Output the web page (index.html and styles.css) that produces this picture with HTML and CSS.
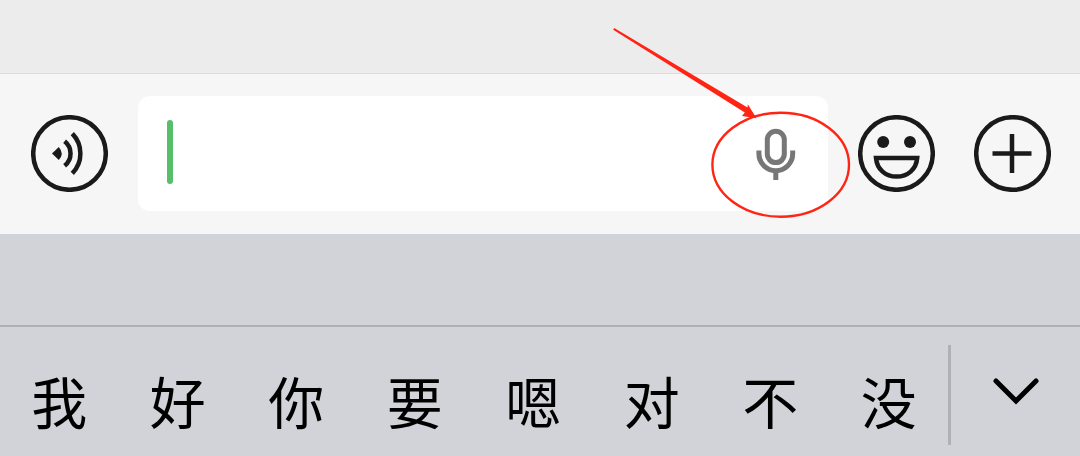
FILE: index.html
```html
<!DOCTYPE html>
<html lang="zh-CN">
<head>
  <meta charset="UTF-8">
  <meta name="viewport" content="width=device-width, initial-scale=1.0">
  <title>语音输入</title>
  <link rel="stylesheet" href="styles.css">
</head>
<body>
  <main class="chat"></main>

  <!-- Message bar -->
  <div class="toolbar">
    <button class="icon-button" type="button" aria-label="语音">
      <svg width="77" height="77" viewBox="0 0 77 77">
        <circle class="line" cx="38.5" cy="38.5" r="36.3"/>
        <path d="M21 38.5l6.8-6.6q5.8 6.6 0 13.2z"/>
        <path class="line" d="M33.6 26.2a15.7 15.7 0 0 1 0 24.6M41.3 18.6a28.5 28.5 0 0 1 0 39.8"/>
      </svg>
    </button>

    <div class="field">
      <span class="caret"></span>
      <input class="message" type="text" aria-label="消息">
      <button class="icon-button mic" type="button" aria-label="语音输入">
        <svg width="40" height="52" viewBox="0 0 40 52">
          <rect x="11.3" y="3.2" width="17" height="31.4" rx="8.5"/>
          <path d="M2.9 22.5v3.3a16.9 16.9 0 0 0 33.8 0V22.5M19.8 42.5v9.5"/>
        </svg>
      </button>
      <!-- Arrow and ring over the mic -->
      <svg class="callout" width="244" height="195" viewBox="0 0 244 195">
        <path d="M3.2 4.8l1-1.8L137.5 82.6l.3-3.4 8.7 14-14.5-2.3 2.8-3.3z"/>
        <ellipse cx="170.7" cy="139.7" rx="68.3" ry="52"/>
      </svg>
    </div>

    <button class="icon-button" type="button" aria-label="表情">
      <svg width="77" height="77" viewBox="0 0 77 77">
        <circle class="line" cx="38.5" cy="38.5" r="36.3"/>
        <circle cx="25.2" cy="27" r="6"/>
        <circle cx="52" cy="27" r="6"/>
        <path class="line" d="M18 43h41.2c-1 11.5-9.6 18.6-20.6 18.6S19 54.5 18 43z"/>
      </svg>
    </button>
    <button class="icon-button more" type="button" aria-label="更多">
      <svg width="77" height="77" viewBox="0 0 77 77">
        <circle class="line" cx="38.5" cy="38.5" r="36.3"/>
        <path class="line" d="M38 19v39M18.5 38.5h39"/>
      </svg>
    </button>
  </div>

  <!-- Keyboard -->
  <div class="keyboard">
    <div class="accessory"></div>
    <div class="candidates">
      <div class="words">
        <button class="word" type="button">我</button>
        <button class="word" type="button">好</button>
        <button class="word" type="button">你</button>
        <button class="word" type="button">要</button>
        <button class="word" type="button">嗯</button>
        <button class="word" type="button">对</button>
        <button class="word" type="button">不</button>
        <button class="word" type="button">没</button>
      </div>
      <button class="expand" type="button" aria-label="展开">
        <svg width="46" height="28" viewBox="0 0 46 28">
          <path d="M3 3l20 20L43 3"/>
        </svg>
      </button>
    </div>
  </div>
</body>
</html>
```

FILE: styles.css
```css
* {
  box-sizing: border-box;
}
body {
  display: flex;
  flex-direction: column;
  min-height: 100vh;
  margin: 0;
  background-color: #ececec;
  font-family: "Noto Sans CJK SC", sans-serif;
}
button {
  padding: 0;
  border: 0;
  background: none;
  color: #000;
  font-family: inherit;
  cursor: pointer;
}
svg {
  display: block;
}
.chat {
  flex: 1;
}

/* Message bar */
.toolbar {
  display: flex;
  align-items: center;
  gap: 30px;
  padding: 22px 29px 23px 31px;
  border-top: 1px solid #dcdcdc;
  background-color: #f6f6f6;
}
.icon-button {
  flex: none;
  fill: #1a1a1a;
}
.icon-button .line {
  fill: none;
  stroke: #1a1a1a;
  stroke-width: 4.5;
}
.more {
  margin-left: 9px;
}
.field {
  position: relative;
  display: flex;
  flex: 1;
  align-items: center;
  min-width: 0;
  height: 115px;
  padding: 0 32px 0 29px;
  border-radius: 12px;
  background-color: #fff;
}
.caret {
  width: 6px;
  height: 64px;
  margin-bottom: 4px;
  border-radius: 3px;
  background-color: #57be6a;
}
.message {
  flex: 1;
  min-width: 0;
  height: 64px;
  padding: 0;
  border: 0;
  outline: 0;
  background: none;
  font-family: inherit;
  font-size: 48px;
}
.mic {
  fill: none;
  stroke: #777;
  stroke-width: 5;
}
.callout {
  position: absolute;
  top: -71px;
  right: -26px;
  pointer-events: none;
  fill: #ff2414;
}
.callout ellipse {
  fill: none;
  stroke: #ff2414;
  stroke-width: 2.4;
}

/* Keyboard */
.keyboard {
  background-color: #d2d3d8;
}
.accessory {
  height: 93px;
  border-bottom: 2px solid #afb0b4;
}
.candidates {
  display: flex;
  height: 129px;
  padding: 18px 0 11px;
}
.words {
  display: flex;
  flex: 1;
  border-right: 3px solid #b0b1b5;
}
.word {
  flex: 1;
  padding-top: 10px;
  font-size: 56px;
  line-height: 80px;
}
.expand {
  display: flex;
  justify-content: center;
  width: 129px;
  padding-top: 33px;
}
.expand path {
  fill: none;
  stroke: #000;
  stroke-width: 5;
  stroke-linecap: round;
}
```
